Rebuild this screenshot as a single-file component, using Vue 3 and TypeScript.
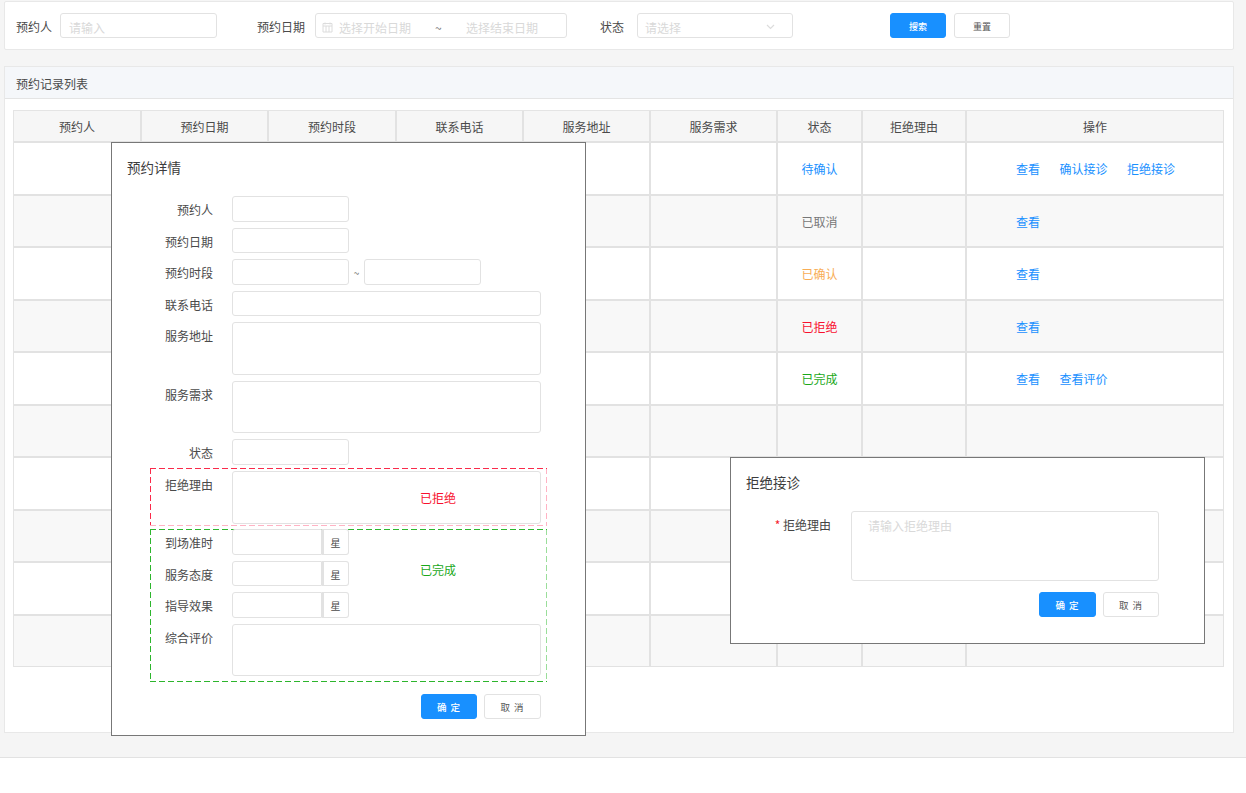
<script setup lang="ts">
interface Row { status?: string; cls?: string; links: string[] }
const headers: { t: string; w: number }[] = [
  { t: '预约人', w: 128 }, { t: '预约日期', w: 127 }, { t: '预约时段', w: 128 },
  { t: '联系电话', w: 127 }, { t: '服务地址', w: 127 }, { t: '服务需求', w: 127 },
  { t: '状态', w: 85 }, { t: '拒绝理由', w: 104 }, { t: '操作', w: 257 }
]
const rows: Row[] = [
  { status: '待确认', cls: 'pending', links: ['查看', '确认接诊', '拒绝接诊'] },
  { status: '已取消', cls: 'cancel', links: ['查看'] },
  { status: '已确认', cls: 'ok', links: ['查看'] },
  { status: '已拒绝', cls: 'rej', links: ['查看'] },
  { status: '已完成', cls: 'done', links: ['查看', '查看评价'] },
  { links: [] }, { links: [] }, { links: [] }, { links: [] }, { links: [] }
]
const ratings = ['到场准时', '服务态度', '指导效果']
</script>

<template>
  <div class="shell">
    <main class="main">
      <section class="filter">
        <label class="lb">预约人</label>
        <div class="field f1 ph">请输入</div>
        <label class="lb l2">预约日期</label>
        <div class="field f2 ph">
          <svg class="cal" width="11" height="11" viewBox="0 0 11 11">
            <path d="M1 1.5h9v8.5H1zM1 4h9M3 .5v2M8 .5v2M4 4v6M7 4v6" fill="none" stroke="#dcdcdc" stroke-width="1" />
          </svg>
          <span class="d1">选择开始日期</span>
          <span class="tilde">~</span>
          <span>选择结束日期</span>
        </div>
        <label class="lb l3">状态</label>
        <div class="field f3 ph">
          <span>请选择</span>
          <svg class="chev" width="9" height="6" viewBox="0 0 9 6">
            <path d="M1 1l3.5 3.5L8 1" fill="none" stroke="#dcdcdc" stroke-width="1.2" />
          </svg>
        </div>
        <button class="btn primary search">搜索</button>
        <button class="btn reset">重置</button>
      </section>

      <section class="panel">
        <header class="phead">预约记录列表</header>
        <div class="table">
          <div class="tr th">
            <div v-for="h in headers" :key="h.t" class="td" :style="{ width: h.w + 'px' }">{{ h.t }}</div>
          </div>
          <div v-for="(r, i) in rows" :key="i" class="tr" :class="{ odd: i % 2 === 1 }">
            <div v-for="h in headers.slice(0, 6)" :key="h.t" class="td" :style="{ width: h.w + 'px' }"></div>
            <div class="td" :class="r.cls" style="width: 85px">{{ r.status }}</div>
            <div class="td" style="width: 104px"></div>
            <div class="td ops" style="width: 257px">
              <a v-for="l in r.links" :key="l">{{ l }}</a>
            </div>
          </div>
        </div>
      </section>
    </main>
    <footer class="foot"></footer>

    <div class="dialog detail">
      <h3 class="dtitle">预约详情</h3>
      <div class="form">
        <div class="row"><span class="lab">预约人</span><div class="box short"></div></div>
        <div class="row"><span class="lab">预约日期</span><div class="box short"></div></div>
        <div class="row">
          <span class="lab">预约时段</span><div class="box short"></div>
          <span class="sep">~</span><div class="box short"></div>
        </div>
        <div class="row"><span class="lab">联系电话</span><div class="box full"></div></div>
        <div class="row"><span class="lab">服务地址</span><div class="box full area"></div></div>
        <div class="row"><span class="lab">服务需求</span><div class="box full area"></div></div>
        <div class="row"><span class="lab">状态</span><div class="box short"></div></div>

        <div class="sec red">
          <div class="row"><span class="lab">拒绝理由</span><div class="box full area"></div></div>
          <span class="tag rej">已拒绝</span>
        </div>
        <div class="sec green">
          <div v-for="n in ratings" :key="n" class="row">
            <span class="lab">{{ n }}</span>
            <div class="group"><div class="box gi"></div><div class="addon">星</div></div>
          </div>
          <div class="row"><span class="lab">综合评价</span><div class="box full area"></div></div>
          <span class="tag done">已完成</span>
        </div>
        <div class="actions a1">
          <button class="btn primary wide">确 定</button>
          <button class="btn wide">取 消</button>
        </div>
      </div>
    </div>

    <div class="dialog refuse">
      <h3 class="dtitle">拒绝接诊</h3>
      <div class="rrow">
        <span class="rlab"><i>*</i> 拒绝理由</span>
        <div class="box rarea ph">请输入拒绝理由</div>
      </div>
      <div class="actions a2">
        <button class="btn primary wide">确 定</button>
        <button class="btn wide">取 消</button>
      </div>
    </div>
  </div>
</template>

<style>
html, body { margin: 0; background: #fff; }
</style>

<style scoped>
* { box-sizing: border-box; }
.shell {
  position: relative;
  height: 793px;
  display: flex;
  flex-direction: column;
  font-family: "Noto Sans CJK SC", "Liberation Sans", sans-serif;
  font-size: 12px;
  color: #4a4a4a;
  overflow: hidden;
}
.main {
  height: 757px;
  background: #f5f5f5;
  padding: 1px 12px 0 4px;
}
.foot { flex: 1; background: #fff; border-top: 1px solid #e2e2e2; }

.filter {
  height: 49px;
  background: #fff;
  border: 1px solid #e8e8e8;
  border-radius: 2px;
  padding: 11px 0 0 11px;
  display: flex;
  align-items: flex-start;
}
.lb { line-height: 28px; height: 25px; white-space: nowrap; }
.l2 { margin-left: 40px; }
.l3 { margin-left: 33px; }
.field {
  height: 25px;
  margin-left: 8px;
  border: 1px solid #e2e2e2;
  border-radius: 3px;
  background: #fff;
  padding-top: 3px;
  display: flex;
  align-items: center;
}
.ph { color: #d9d9d9; }
.f1 { width: 157px; padding-left: 8px; }
.f2 { width: 252px; margin-left: 10px; padding-left: 6px; }
.f3 { width: 156px; margin-left: 13px; padding-left: 7px; position: relative; }
.cal { margin-right: 6px; flex: none; }
.d1 { width: 73px; }
.tilde { width: 54px; padding-left: 23px; color: #777; }
.chev { position: absolute; left: 128px; top: 10px; }
.btn {
  height: 25px;
  width: 56px;
  border: 1px solid #e2e2e2;
  border-radius: 3px;
  background: #fff;
  color: #555;
  font: inherit;
  font-size: 9px;
  padding: 1px 0 0;
}
.primary { background: #1890ff; border-color: #1890ff; color: #fff; font-weight: 500; }
.search { margin-left: 97px; }
.reset { margin-left: 8px; }
.wide { height: 25px; font-size: 9.5px; letter-spacing: 1px; }

.panel {
  margin-top: 16px;
  height: 667px;
  width: 1230px;
  background: #fff;
  border: 1px solid #e8e8e8;
}
.phead {
  height: 32px;
  line-height: 33px;
  padding-left: 11px;
  background: #f5f7fa;
  border-bottom: 1px solid #e4e4e4;
}
.table {
  margin: 11px 0 0 8px;
  width: 1211px;
  border-left: 1px solid #e4e4e4;
  border-top: 1px solid #e4e4e4;
}
.tr { display: flex; height: 52.5px; }
.tr:last-child { height: 51.5px; }
.th { height: 32px; background: #f6f6f6; }
.odd { background: #f8f8f8; }
.td {
  flex: none;
  padding-top: 1px;
  border-right: 2px solid #e2e2e2;
  border-bottom: 2px solid #e2e2e2;
  display: flex;
  align-items: center;
  justify-content: center;
}
.th .td { padding-top: 0; }
.td:last-child { border-right-width: 1px; }
.tr:last-child .td { border-bottom-width: 1px; }
.ops { justify-content: flex-start; padding-left: 49px; gap: 19.5px; }
.ops a { color: #1890ff; }
.pending { color: #1890ff; }
.cancel { color: #777; }
.ok { color: #f8ad55; }
.rej { color: #f8102f; }
.done { color: #1aa81a; }

.dialog {
  position: absolute;
  width: 475px;
  background: #fff;
  border: 1px solid #777;
}
.detail { left: 111px; top: 142px; height: 594px; }
.refuse { left: 730px; top: 457px; height: 187px; }
.dtitle {
  margin: 0;
  font-weight: 400;
  font-size: 13.5px;
  line-height: 20px;
  color: #3c3c3c;
  padding: 14px 0 0 15px;
}
.form { margin: 19px 38px 0; width: 397px; }
.row { display: flex; align-items: flex-start; margin-bottom: 6px; }
.lab { width: 63px; height: 25.5px; margin-right: 19px; text-align: right; line-height: 28px; flex: none; }
.box { border: 1px solid #e2e2e2; border-radius: 3px; background: #fff; height: 25.5px; }
.short { width: 117px; }
.full { width: 309px; }
.area { height: 52.5px; }
.sep { width: 15px; text-align: center; line-height: 28px; height: 25.5px; font-size: 10px; color: #777; }

.sec {
  position: relative;
  border: 1px solid transparent;
  width: 397px;
  background-origin: border-box;
  background-clip: border-box;
  background-repeat: repeat-x, repeat-x, repeat-y, repeat-y;
  background-size: 9px 1px, 9px 1px, 1px 9px, 1px 9px;
  background-position: left top, left bottom, left top, right top;
}
.sec .lab { width: 62px; }
.sec .row:last-of-type { margin-bottom: 0; }
.red {
  margin-top: -2.5px;
  height: 58px;
  padding-top: 2px;
  background-image:
    linear-gradient(to right, #fa2a4a 6.5px, transparent 6.5px),
    linear-gradient(to right, #ffb3c4 6.5px, transparent 6.5px),
    linear-gradient(to bottom, #fa2a4a 6.5px, transparent 6.5px),
    linear-gradient(to bottom, #ffb3c4 6.5px, transparent 6.5px);
}
.green {
  margin-top: 3px;
  height: 153px;
  background-image:
    linear-gradient(to right, #2db52d 6.5px, transparent 6.5px),
    linear-gradient(to right, #2db52d 6.5px, transparent 6.5px),
    linear-gradient(to bottom, #2db52d 6.5px, transparent 6.5px),
    linear-gradient(to bottom, #9ade9a 6.5px, transparent 6.5px);
}
.green .row:first-child { margin-top: -1px; }
.group { display: flex; width: 117px; }
.gi { width: 90px; border-radius: 3px 0 0 3px; }
.addon {
  width: 27px;
  height: 25.5px;
  border: 1px solid #e2e2e2;
  border-left-width: 2px;
  border-radius: 0 3px 3px 0;
  font-size: 10px;
  line-height: 25px;
  padding-right: 1px;
  text-align: center;
}
.tag { position: absolute; left: 269px; white-space: nowrap; }
.red .tag { top: 20px; }
.green .tag { top: 31px; }

.actions { display: flex; justify-content: flex-end; gap: 7px; }
.a1 { margin-top: 12px; padding-right: 6px; }
.a1 .btn:last-child { width: 57px; }
.a2 { margin-top: 11px; padding-right: 45px; }
.a2 .btn:first-child { width: 57px; }

.rrow { display: flex; margin-top: 19px; }
.rlab { width: 100px; text-align: right; margin-right: 20px; line-height: 28px; color: #444; }
.rlab i { color: #f5222d; font-style: normal; }
.rarea { width: 308px; height: 70px; padding: 5px 16px; line-height: 18px; }
</style>
